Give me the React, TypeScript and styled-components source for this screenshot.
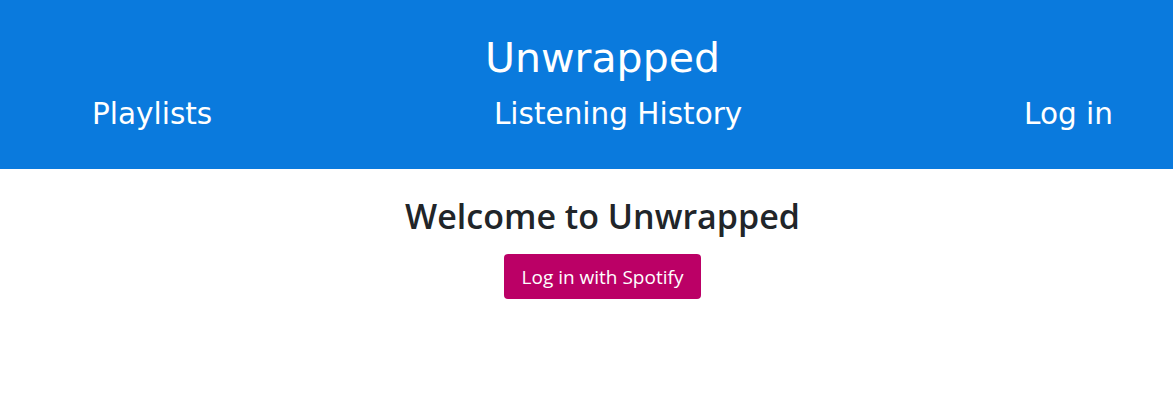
import React from "react";
import styled, { createGlobalStyle } from "styled-components";

const Global = createGlobalStyle`
  html, body { margin: 0; padding: 0; background: #ffffff; }
  body { font-family: "Open Sans", "Noto Sans", sans-serif; color: #212529; }
`;

const Header = styled.header`
  background: #0a7add;
  padding: 34px 60px 37px 92px;
  color: #ffffff;
  font-family: "DejaVu Sans", Verdana, sans-serif;
`;

const Title = styled.h1`
  margin: 0 0 14px;
  text-align: center;
  font-size: 41px;
  font-weight: 400;
  line-height: 48px;
`;

const Nav = styled.nav`
  display: flex;
  justify-content: space-between;
  align-items: center;
`;

const NavLink = styled.a`
  color: #ffffff;
  text-decoration: none;
  font-size: 29.5px;
  line-height: 36px;
`;

const Main = styled.main`
  padding: 27px 60px 0 92px;
  display: flex;
  flex-direction: column;
  align-items: center;
`;

const Heading = styled.h2`
  margin: 0 0 17px;
  font-size: 34px;
  font-weight: 600;
  line-height: 41px;
  color: #212529;
`;

const Button = styled.button`
  background: #bb0066;
  color: #ffffff;
  border: none;
  border-radius: 4px;
  height: 45px;
  width: 197px;
  font-family: "Open Sans", "Noto Sans", sans-serif;
  font-size: 19px;
  padding: 0;
  cursor: pointer;
`;

export default function App() {
  return (
    <>
      <Global />
      <Header>
        <Title>Unwrapped</Title>
        <Nav>
          <NavLink href="#">Playlists</NavLink>
          <NavLink href="#">Listening History</NavLink>
          <NavLink href="#">Log in</NavLink>
        </Nav>
      </Header>
      <Main>
        <Heading>Welcome to Unwrapped</Heading>
        <Button>Log in with Spotify</Button>
      </Main>
    </>
  );
}
